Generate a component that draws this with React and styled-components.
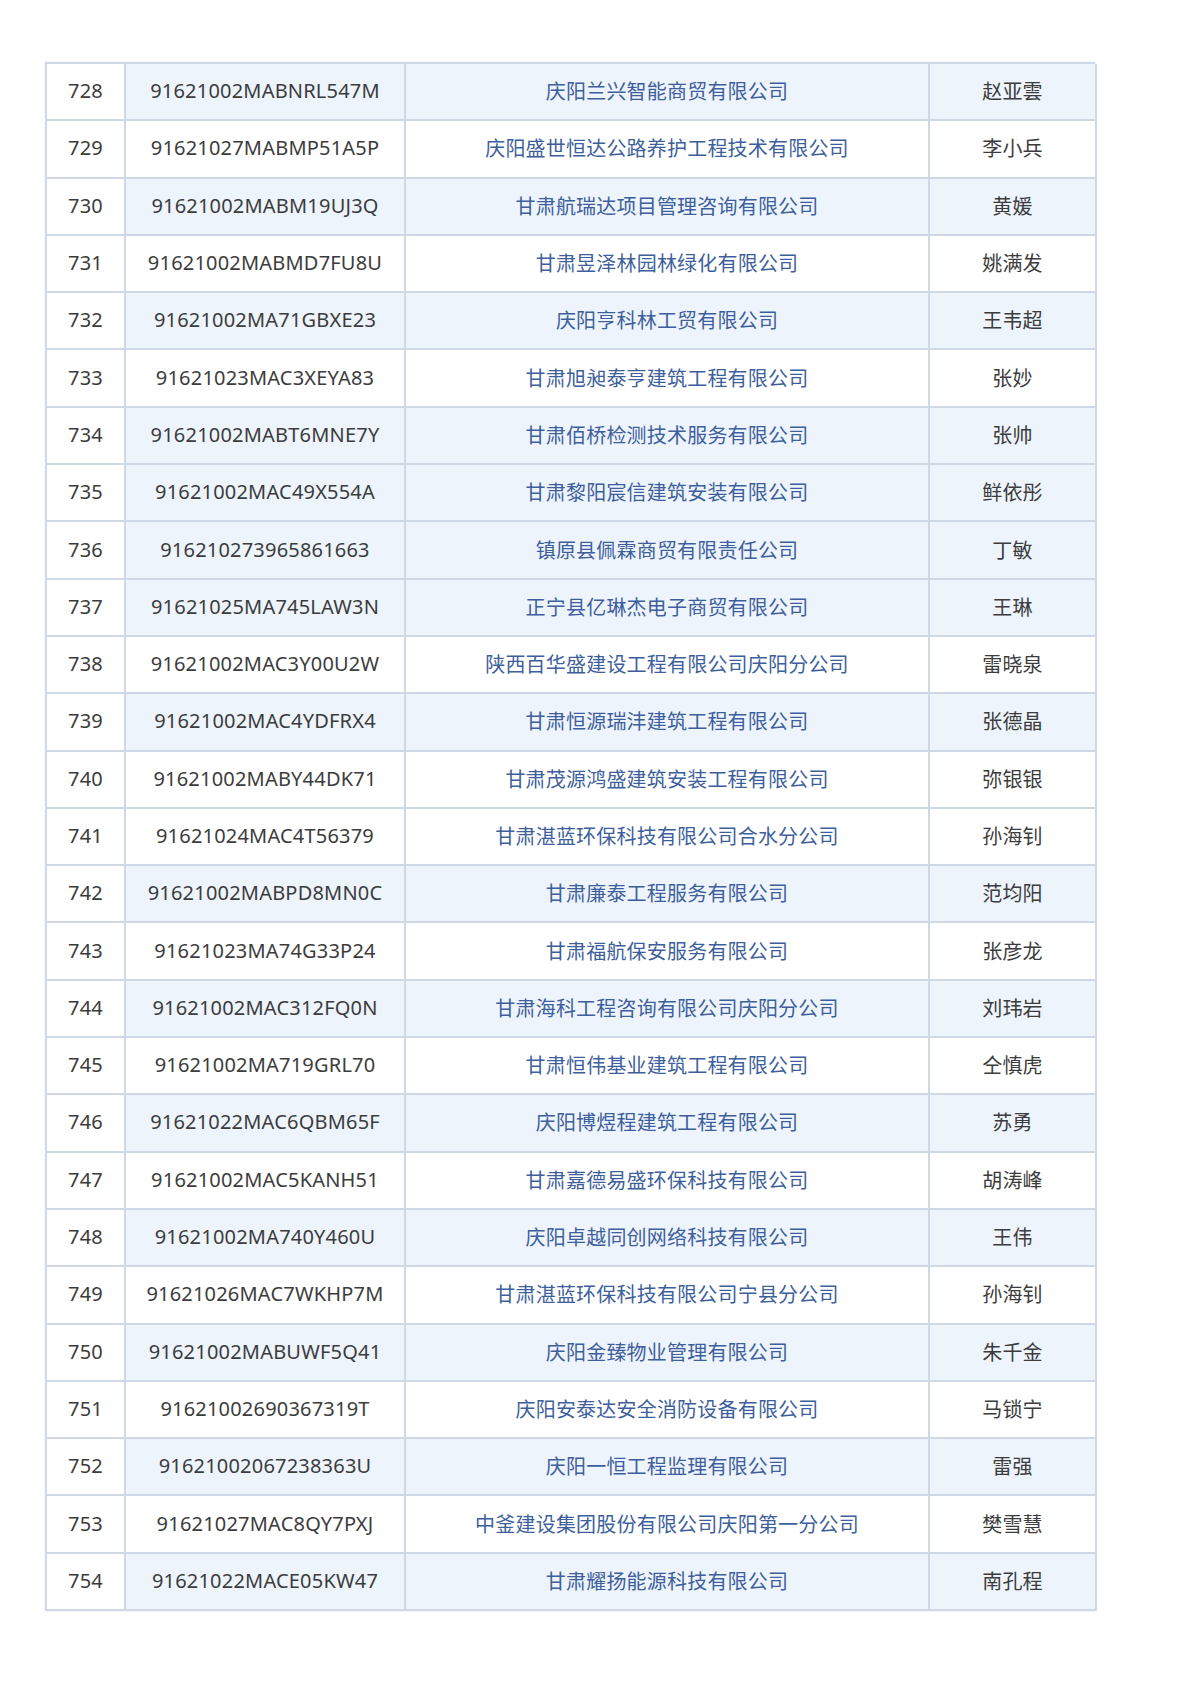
import React from 'react'
import styled, { createGlobalStyle } from 'styled-components'

const Global = createGlobalStyle`
  html, body {
    margin: 0;
    padding: 0;
    background: #ffffff;
  }
  body {
    font-family: "Noto Sans", "Noto Sans CJK SC", sans-serif;
  }
`

const Page = styled.div`
  width: 1200px;
  height: 1695px;
  padding: 62px 0 0 45px;
  box-sizing: border-box;
`

const Table = styled.div`
  width: 1050px;
  display: grid;
  grid-template-columns: 79px 280px 524px 167px;
  grid-auto-rows: 57.3px;
  border-top: 2px solid #cfd9e6;
  border-left: 2px solid #cfd9e6;
  box-sizing: border-box;
  box-shadow: 0 0 2px rgba(160, 180, 205, 0.35);
`

const Cell = styled.div`
  display: flex;
  align-items: center;
  justify-content: center;
  border-right: 2px solid #cfd9e6;
  border-bottom: 2px solid #cfd9e6;
  background: ${p => (p.$tint ? '#edf4fc' : '#ffffff')};
  color: ${p => (p.$link ? '#3e5f9c' : '#3c3c3c')};
  font-size: 20px;
  letter-spacing: 0.2px;
  white-space: nowrap;
  padding-bottom: 2px;
  box-sizing: border-box;
`

const rows = [
  ['728', '91621002MABNRL547M', '庆阳兰兴智能商贸有限公司', '赵亚雲'],
  ['729', '91621027MABMP51A5P', '庆阳盛世恒达公路养护工程技术有限公司', '李小兵'],
  ['730', '91621002MABM19UJ3Q', '甘肃航瑞达项目管理咨询有限公司', '黄媛'],
  ['731', '91621002MABMD7FU8U', '甘肃昱泽林园林绿化有限公司', '姚满发'],
  ['732', '91621002MA71GBXE23', '庆阳亨科林工贸有限公司', '王韦超'],
  ['733', '91621023MAC3XEYA83', '甘肃旭昶泰亨建筑工程有限公司', '张妙'],
  ['734', '91621002MABT6MNE7Y', '甘肃佰桥检测技术服务有限公司', '张帅'],
  ['735', '91621002MAC49X554A', '甘肃黎阳宸信建筑安装有限公司', '鲜依彤'],
  ['736', '916210273965861663', '镇原县佩霖商贸有限责任公司', '丁敏'],
  ['737', '91621025MA745LAW3N', '正宁县亿琳杰电子商贸有限公司', '王琳'],
  ['738', '91621002MAC3Y00U2W', '陕西百华盛建设工程有限公司庆阳分公司', '雷晓泉'],
  ['739', '91621002MAC4YDFRX4', '甘肃恒源瑞沣建筑工程有限公司', '张德晶'],
  ['740', '91621002MABY44DK71', '甘肃茂源鸿盛建筑安装工程有限公司', '弥银银'],
  ['741', '91621024MAC4T56379', '甘肃湛蓝环保科技有限公司合水分公司', '孙海钊'],
  ['742', '91621002MABPD8MN0C', '甘肃廉泰工程服务有限公司', '范均阳'],
  ['743', '91621023MA74G33P24', '甘肃福航保安服务有限公司', '张彦龙'],
  ['744', '91621002MAC312FQ0N', '甘肃海科工程咨询有限公司庆阳分公司', '刘玮岩'],
  ['745', '91621002MA719GRL70', '甘肃恒伟基业建筑工程有限公司', '仝慎虎'],
  ['746', '91621022MAC6QBM65F', '庆阳博煜程建筑工程有限公司', '苏勇'],
  ['747', '91621002MAC5KANH51', '甘肃嘉德易盛环保科技有限公司', '胡涛峰'],
  ['748', '91621002MA740Y460U', '庆阳卓越同创网络科技有限公司', '王伟'],
  ['749', '91621026MAC7WKHP7M', '甘肃湛蓝环保科技有限公司宁县分公司', '孙海钊'],
  ['750', '91621002MABUWF5Q41', '庆阳金臻物业管理有限公司', '朱千金'],
  ['751', '91621002690367319T', '庆阳安泰达安全消防设备有限公司', '马锁宁'],
  ['752', '91621002067238363U', '庆阳一恒工程监理有限公司', '雷强'],
  ['753', '91621027MAC8QY7PXJ', '中釜建设集团股份有限公司庆阳第一分公司', '樊雪慧'],
  ['754', '91621022MACE05KW47', '甘肃耀扬能源科技有限公司', '南孔程'],
]

const tinted = new Set(['728', '730', '732', '734', '735', '736', '737', '739', '742', '744', '746', '748', '750', '752', '754'])

const App = () => (
  <Page>
    <Global />
    <Table>
      {rows.map(([no, code, company, person]) => {
        const t = tinted.has(no)
        return (
          <React.Fragment key={no}>
            <Cell>{no}</Cell>
            <Cell $tint={t}>{code}</Cell>
            <Cell $tint={t} $link>{company}</Cell>
            <Cell $tint={t}>{person}</Cell>
          </React.Fragment>
        )
      })}
    </Table>
  </Page>
)

export default App
